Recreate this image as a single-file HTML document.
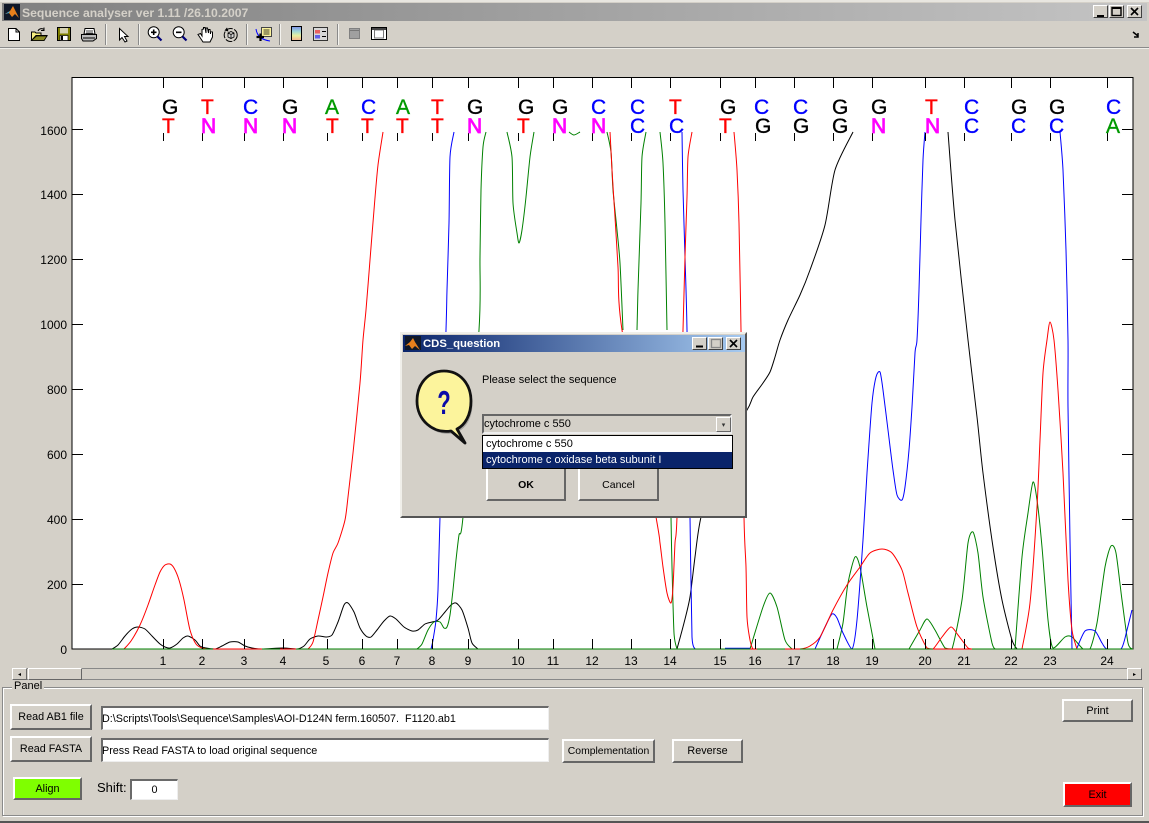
<!DOCTYPE html>
<html><head><meta charset="utf-8"><title>Sequence analyser</title>
<style>
html,body{margin:0;padding:0}
body{width:1149px;height:823px;position:relative;overflow:hidden;background:#d4d0c8;font-family:"Liberation Sans",sans-serif;font-size:11px;color:#000}
.a{position:absolute;box-sizing:border-box}
.btn{position:absolute;box-sizing:border-box;background:#d4d0c8;border-top:2px solid #fff;border-left:2px solid #fff;border-right:2px solid #666;border-bottom:2px solid #666;text-align:center;font-size:10.8px;display:flex;align-items:center;justify-content:center;white-space:nowrap}
.inp{position:absolute;box-sizing:border-box;background:#fff;border-top:2px solid #6a6a6a;border-left:2px solid #6a6a6a;border-right:1px solid #eee;border-bottom:1px solid #eee;font-size:10.8px;margin-left:0;padding-left:0;display:flex;align-items:center;white-space:nowrap;overflow:hidden}
.tb{position:absolute;box-sizing:border-box;width:15px;height:13px;background:#d4d0c8;border-top:1px solid #fff;border-left:1px solid #fff;border-right:1px solid #404040;border-bottom:1px solid #404040}
.sep{position:absolute;top:24px;width:2px;height:21px;background:#f4f3ef;border-left:1px solid #8a8a8a;box-sizing:border-box}
svg{position:absolute;left:0;top:0}
</style></head>
<body>
<!-- window frame -->
<div class="a" style="left:0;top:0;width:1149px;height:2px;background:#e8e6e0"></div>
<div class="a" style="left:0;top:821px;width:1149px;height:2px;background:#555"></div>
<div class="a" style="left:2px;top:3px;width:1145px;height:18px;background:linear-gradient(90deg,#808080,#c4c4c4)"></div>
<div class="a" style="left:22px;top:5px;height:16px;line-height:16px;font-weight:bold;font-size:12.200px;color:#d4d0c8;white-space:nowrap">Sequence analyser ver 1.11 /26.10.2007</div>
<div class="tb" style="left:1093px;top:5px"></div><div class="tb" style="left:1109px;top:5px"></div><div class="tb" style="left:1127px;top:5px"></div>
<div class="a" style="left:0;top:47px;width:1149px;height:2px;background:#f0efea;border-top:1px solid #8a8a8a"></div>

<svg width="1149" height="823" viewBox="0 0 1149 823" font-family="'Liberation Sans',sans-serif">
<!-- title icon -->
<rect x="4" y="4" width="16" height="16" fill="#101828"/>
<path d="M5 14 L10 11 L13 6 L15 10 L19 18 L15 14 L12 17 L9 13Z" fill="#e8801c"/><path d="M5 14 L10 11 L9 13Z" fill="#38a8d8"/>
<!-- title buttons glyphs -->
<path d="M1097 15h7v2h-7z" fill="#000"/>
<rect x="1112" y="7.500" width="9" height="8" fill="none" stroke="#000" stroke-width="1.400"/><path d="M1112 8h9" stroke="#000" stroke-width="2"/>
<path d="M1131 8l7 7M1138 8l-7 7" stroke="#000" stroke-width="1.600"/>
<!-- toolbar icons -->
<path d="M8.500 28.500H16L19.500 32V40.500H8.500Z" fill="#fff" stroke="#000"/><path d="M16 28.500V32H19.500" fill="none" stroke="#000"/>
<path d="M31.500 40.500V32H35L36 33H41V35.500H36L31.500 40.500H44L47 35.500H41" fill="#f8f080" stroke="#000"/><path d="M32 40L36.500 36H47L44 40.500H32Z" fill="#8a8a20" stroke="#000" stroke-width=".8"/><path d="M38 31C39 28.500 42 28 44 29.500M44 27.500V30.500H41" fill="none" stroke="#000"/>
<rect x="57.500" y="27.500" width="13" height="13" fill="#808000" stroke="#000"/><rect x="60" y="28" width="8" height="5.500" fill="#d4d0b0"/><rect x="60" y="35.500" width="8" height="5" fill="#fff" stroke="#000" stroke-width=".7"/><rect x="61" y="36" width="2" height="4" fill="#000"/>
<path d="M85 28.500H94L95 34H84Z" fill="#fff" stroke="#000"/><path d="M86 31h7M86 33h7" stroke="#000" stroke-width=".7"/><path d="M81.500 34.500H96.500V38.500L93 41H83L81.500 38.500Z" fill="#bbb" stroke="#000"/><path d="M83 38h12" stroke="#000"/>
<path d="M119.500 28.500V40L122 37.500L125 42L127 41L124.500 36.500H128Z" fill="#fff" stroke="#000"/>
<g fill="#d8d8d8" stroke="#000"><circle cx="153.700" cy="32.300" r="5.500" fill="#fff"/><circle cx="178.700" cy="32.300" r="5.500" fill="#fff"/></g>
<path d="M151 32.300h5.500M153.700 29.500v5.500M176 32.300h5.500" stroke="#000" stroke-width="1.600"/>
<path d="M157.500 36.500L161.500 40.500M182.500 36.500L186.500 40.500" stroke="#00007a" stroke-width="2.200"/>
<path d="M198 34.500L200.500 33.500L202 36V29.500L203.500 29V27.500L205 27.500L206 33V28L207.500 28L208.500 33V29.500L210 29.500L210.500 34V31.500L212.500 32V37L210 42H203L201 39Z" fill="#fff" stroke="#000"/>
<circle cx="230.700" cy="35" r="6.500" fill="none" stroke="#000" stroke-dasharray="7 1.500"/><path d="M224.500 30.500L227 27.500L228.500 31.500Z" fill="#000"/><path d="M228 33L231 31.500L234 33V37L231 38.500L228 37ZM231 34.500V38M228 33L231 34.500L234 33" fill="#d8d8d8" stroke="#000" stroke-width=".8"/>
<rect x="261.500" y="27.500" width="10" height="9" fill="#fbf39c" stroke="#444"/><path d="M263.500 30h6M263.500 32h6M263.500 34h6" stroke="#000" stroke-width=".8"/>
<path d="M256 29C257 36 262 40 270 41" fill="none" stroke="#00f"/><path d="M256.500 37H264M260.500 33.500V41" stroke="#000" stroke-width="2.200"/>
<defs><linearGradient id="cb" x1="0" y1="0" x2="0" y2="1"><stop offset="0" stop-color="#7f8fe8"/><stop offset=".35" stop-color="#9fd8d8"/><stop offset=".65" stop-color="#e8f0a0"/><stop offset="1" stop-color="#f4b090"/></linearGradient></defs>
<rect x="291.500" y="26.500" width="10" height="14" fill="url(#cb)" stroke="#000"/>
<rect x="313.500" y="27.500" width="14" height="13" fill="#d8d8d8" stroke="#333"/><rect x="315" y="30" width="5" height="3.500" fill="#e86060"/><rect x="315" y="35" width="5" height="3.500" fill="#6060e8"/><path d="M322 31.500h4M322 36.500h4" stroke="#000"/>
<rect x="349.500" y="28.500" width="10" height="10" fill="#a0a0a0" stroke="#808080"/><path d="M350 30.500h9" stroke="#777"/>
<rect x="371.500" y="27.500" width="15" height="12" fill="#fff" stroke="#000"/><rect x="374.500" y="30" width="9" height="8" fill="#fff" stroke="#777"/><rect x="372" y="28" width="14" height="2" fill="#444"/>
<path d="M1133 32L1138 36M1138 33V37H1134" fill="none" stroke="#000" stroke-width="1.500"/>

<!-- plot -->
<rect x="72" y="77" width="1061" height="572" fill="#fff"/>
<g id="traces" fill="none" stroke-width="1">
<g stroke="#000">
<polyline points="112,649 118,645 125,636 132,629 138,627 145,629 152,636 160,644 165,647 170,648 177,644 183,638 188,636 195,640 200,646 206,648 215,649 222,646 230,642 238,642 245,646 252,648 262,649 283,648 297,649 304,646 310,639 318,636 326,637 332,635 338,622 344,605 348,603 354,612 360,628 366,636 371,637 377,630 384,621 390,616 396,619 404,627 412,631 418,630 425,624 432,622 438,620 445,612 451,605 456,603 462,610 468,628 472,643 478,649"/>
<polyline points="677,649 684,623 690,597 695,557 701,517 720,450 747,410 753,397 763,383 770,372 775,357 780,340 788,320 800,295 810,270 825,225 835,170 853,132"/>
<polyline points="948,132 955,220 968,340 977,417 983,473 993,547 1002,600 1012,640 1017,649"/>
</g>
<g stroke="#008000">
<polyline points="417,649 422,644 428,630 434,622 440,622 444,628 447,627 450,615 453,590 456,560 459,535 463,517 479,330 480,257 481,190 483,147 486,132"/>
<polyline points="507,132 512,157 513,203 517,233 519,243 522,230 526,197 530,157 534,132"/>
<polyline points="569,132 574,135 580,132"/>
<polyline points="607,132 611,152 613,190 617,230 620,263 623,330"/>
<polyline points="646,132 642,157 641,203 638,290 637,330"/>
<polyline points="660,132 663,163 665,223 667,330"/>
<polyline points="671,517 672,567 674,633 677,649"/>
<polyline points="750,649 763,607 770,593 777,607 785,640 792,649"/>
<polyline points="837,649 843,623 848,583 855,557 860,567 867,607 875,649"/>
<polyline points="909,649 920,630 927,619 935,630 945,648 952,649 962,600 968,543 973,532 978,553 983,597 992,643 995,649"/>
<polyline points="1015,649 1022,557 1028,513 1033,482 1037,500 1042,547 1048,620 1053,648 1065,637 1072,637 1083,649 1090,649 1097,623 1105,567 1111,546 1116,553 1122,600 1128,643 1132,649"/>
</g>
<g stroke="#0000ff">
<polyline points="431,649 433,640 436,620 438,590 440,517 446,330 447,290 449,223 450,157 454,132"/>
<polyline points="682,132 683,190 685,257 687,330 690,517 692,637 695,649"/>
<path d="M725 648.500H750" stroke-width="1.500"/>
<polyline points="815,649 825,627 832,614 837,618 843,633 852,649 857,620 863,540 867,473 872,403 876,377 880,372 883,390 888,430 893,470 897,495 902,500 905,487 909,450 912,407 915,353 917,340 919,290 921,220 923,160 925,132"/>
<polyline points="1060,132 1063,170 1066,250 1068,340 1068,407 1070,540 1072,649"/>
<polyline points="1077,648 1085,631 1095,631 1102,643 1107,649 1121,649 1127,630 1132,610"/>
</g>
<g stroke="#ff0000">
<polyline points="124,649 131,641 140,625 148,605 155,585 160,572 165,565 170,564 174,568 179,580 184,600 190,630 196,644 202,648 208,649"/>
<polyline points="305,649 308,649 313,642 318,620 323,597 328,573 333,553 338,543 345,520 348,497 353,453 360,383 363,340 366,310 370,260 374,210 378,165 383,132"/>
<polyline points="610,132 612,170 615,217 618,267 622,330 656,517 660,543 663,567 667,593 671,603 673,587 675,543 677,517 683,330 685,257 687,197 688,157 692,132"/>
<polyline points="734,132 737,170 739,223 741,330 744,517 746,567 747,617 750,640 753,649 757,649"/>
<polyline points="785,649 800,649 810,646 820,637 833,610 847,585 860,567 870,553 882,549 892,553 902,570 908,593 917,627 927,648 933,649 942,637 951,627 958,635 968,648 972,649"/>
<polyline points="1022,649 1030,603 1037,507 1040,440 1043,373 1047,340 1050,322 1054,340 1058,390 1063,473 1068,580 1072,630 1077,649"/>
</g>
</g>
<!-- axes -->
<path d="M72 77.500H1133V649H72Z" fill="none" stroke="#000"/>
<path d="M112 649H1133" stroke="#008000"/>
<path d="M213 649H262M280 649H296M750 649H757M785 649H800M933 649H972" stroke="#f00"/>
<g stroke="#000" fill="none">
<path d="M72 129.500h11M72 194.500h11M72 259.500h11M72 324.500h11M72 389.500h11M72 454.500h11M72 519.500h11M72 584.500h11M1122 129.500h11M1122 194.500h11M1122 259.500h11M1122 324.500h11M1122 389.500h11M1122 454.500h11M1122 519.500h11M1122 584.500h11"/>
<path d="M163.500 77v11M202.500 77v11M244.500 77v11M283.500 77v11M327.500 77v11M362.500 77v11M397.500 77v11M432.500 77v11M468.500 77v11M518.500 77v11M553.500 77v11M592.500 77v11M631.500 77v11M670.500 77v11M720.500 77v11M755.500 77v11M794.500 77v11M833.500 77v11M872.500 77v11M925.500 77v11M964.500 77v11M1011.500 77v11M1050.500 77v11M1107.500 77v11"/>
<path d="M163.500 133v8M202.500 133v8M244.500 133v8M283.500 133v8M327.500 133v8M362.500 133v8M397.500 133v8M432.500 133v8M468.500 133v8M518.500 133v8M553.500 133v8M592.500 133v8M631.500 133v8M670.500 133v8M720.500 133v8M755.500 133v8M794.500 133v8M833.500 133v8M872.500 133v8M925.500 133v8M964.500 133v8M1011.500 133v8M1050.500 133v8M1107.500 133v8"/>
<path d="M163.500 639v10M202.500 639v10M244.500 639v10M283.500 639v10M327.500 639v10M362.500 639v10M397.500 639v10M432.500 639v10M468.500 639v10M518.500 639v10M553.500 639v10M592.500 639v10M631.500 639v10M670.500 639v10M720.500 639v10M755.500 639v10M794.500 639v10M833.500 639v10M872.500 639v10M925.500 639v10M964.500 639v10M1011.500 639v10M1050.500 639v10M1107.500 639v10"/>
</g>
<!-- y labels -->
<g font-size="12" text-anchor="end" fill="#000">
<text x="67" y="135">1600</text><text x="67" y="199">1400</text><text x="67" y="264">1200</text><text x="67" y="329">1000</text><text x="67" y="394">800</text><text x="67" y="459">600</text><text x="67" y="524">400</text><text x="67" y="589">200</text><text x="67" y="654">0</text>
</g>
<!-- x labels -->
<g font-size="12" text-anchor="middle" fill="#000">
<text x="163" y="665">1</text><text x="202" y="665">2</text><text x="244" y="665">3</text><text x="283" y="665">4</text><text x="326" y="665">5</text><text x="362" y="665">6</text><text x="397" y="665">7</text><text x="432" y="665">8</text><text x="468" y="665">9</text><text x="518" y="665">10</text><text x="553" y="665">11</text><text x="592" y="665">12</text><text x="631" y="665">13</text><text x="670" y="665">14</text><text x="720" y="665">15</text><text x="755" y="665">16</text><text x="794" y="665">17</text><text x="833" y="665">18</text><text x="872" y="665">19</text><text x="925" y="665">20</text><text x="964" y="665">21</text><text x="1011" y="665">22</text><text x="1050" y="665">23</text><text x="1107" y="665">24</text>
</g>
<!-- sequence letters -->
<g font-size="21" stroke-width=".35">
<g transform="translate(0,0)">
<text x="162" y="114" fill="#000" stroke="#000">G</text><text x="201" y="114" fill="#f00" stroke="#f00">T</text><text x="243" y="114" fill="#00f" stroke="#00f">C</text><text x="282" y="114" fill="#000" stroke="#000">G</text><text x="325" y="114" fill="#090" stroke="#090">A</text><text x="361" y="114" fill="#00f" stroke="#00f">C</text><text x="396" y="114" fill="#090" stroke="#090">A</text><text x="431" y="114" fill="#f00" stroke="#f00">T</text><text x="467" y="114" fill="#000" stroke="#000">G</text><text x="518" y="114" fill="#000" stroke="#000">G</text><text x="552" y="114" fill="#000" stroke="#000">G</text><text x="591" y="114" fill="#00f" stroke="#00f">C</text><text x="630" y="114" fill="#00f" stroke="#00f">C</text><text x="669" y="114" fill="#f00" stroke="#f00">T</text><text x="720" y="114" fill="#000" stroke="#000">G</text><text x="754" y="114" fill="#00f" stroke="#00f">C</text><text x="793" y="114" fill="#00f" stroke="#00f">C</text><text x="832" y="114" fill="#000" stroke="#000">G</text><text x="871" y="114" fill="#000" stroke="#000">G</text><text x="925" y="114" fill="#f00" stroke="#f00">T</text><text x="964" y="114" fill="#00f" stroke="#00f">C</text><text x="1011" y="114" fill="#000" stroke="#000">G</text><text x="1049" y="114" fill="#000" stroke="#000">G</text><text x="1106" y="114" fill="#00f" stroke="#00f">C</text>
<text x="162" y="133" fill="#f00" stroke="#f00">T</text><text x="201" y="133" fill="#f0f" stroke="#f0f" stroke-width=".8">N</text><text x="243" y="133" fill="#f0f" stroke="#f0f" stroke-width=".8">N</text><text x="282" y="133" fill="#f0f" stroke="#f0f" stroke-width=".8">N</text><text x="326" y="133" fill="#f00" stroke="#f00">T</text><text x="361" y="133" fill="#f00" stroke="#f00">T</text><text x="396" y="133" fill="#f00" stroke="#f00">T</text><text x="431" y="133" fill="#f00" stroke="#f00">T</text><text x="467" y="133" fill="#f0f" stroke="#f0f" stroke-width=".8">N</text><text x="517" y="133" fill="#f00" stroke="#f00">T</text><text x="552" y="133" fill="#f0f" stroke="#f0f" stroke-width=".8">N</text><text x="591" y="133" fill="#f0f" stroke="#f0f" stroke-width=".8">N</text><text x="630" y="133" fill="#00f" stroke="#00f">C</text><text x="669" y="133" fill="#00f" stroke="#00f">C</text><text x="719" y="133" fill="#f00" stroke="#f00">T</text><text x="755" y="133" fill="#000" stroke="#000">G</text><text x="793" y="133" fill="#000" stroke="#000">G</text><text x="832" y="133" fill="#000" stroke="#000">G</text><text x="871" y="133" fill="#f0f" stroke="#f0f" stroke-width=".8">N</text><text x="925" y="133" fill="#f0f" stroke="#f0f" stroke-width=".8">N</text><text x="964" y="133" fill="#00f" stroke="#00f">C</text><text x="1011" y="133" fill="#00f" stroke="#00f">C</text><text x="1049" y="133" fill="#00f" stroke="#00f">C</text><text x="1106" y="133" fill="#090" stroke="#090">A</text>
</g>
</g>
</svg>

<div class="sep" style="left:105px"></div><div class="sep" style="left:138px"></div><div class="sep" style="left:246px"></div><div class="sep" style="left:279px"></div><div class="sep" style="left:337px"></div>

<!-- scrollbar -->
<div class="a" style="left:12px;top:668px;width:1130px;height:12px;border-top:1px solid #888;border-bottom:1px solid #888"></div>
<div class="btn" style="left:12px;top:668px;width:15px;height:12px;border-width:1px;font-size:6px">◂</div>
<div class="btn" style="left:28px;top:668px;width:54px;height:12px;border-width:1px"></div>
<div class="btn" style="left:1127px;top:668px;width:15px;height:12px;border-width:1px;font-size:6px">▸</div>

<!-- panel -->
<div class="a" style="left:2px;top:687px;width:1141px;height:129px;border:1px solid #8a8a8a;box-shadow:inset 1px 1px 0 #fff,1px 1px 0 #fff"></div>
<div class="a" style="left:12px;top:680px;padding:0 2px;height:13px;line-height:13px;background:#d4d0c8;font-size:11px">Panel</div>
<div class="btn" style="left:10px;top:704px;width:82px;height:26px">Read AB1 file</div>
<div class="btn" style="left:10px;top:736px;width:82px;height:26px">Read FASTA</div>
<div class="inp" style="left:101px;top:706px;width:448px;height:24px;text-indent:-1px">D:\Scripts\Tools\Sequence\Samples\AOI-D124N ferm.160507.&nbsp; F1120.ab1</div>
<div class="inp" style="left:101px;top:738px;width:448px;height:24px;text-indent:-1px">Press Read FASTA to load original sequence</div>
<div class="btn" style="left:562px;top:739px;width:93px;height:24px;font-size:10.4px">Complementation</div>
<div class="btn" style="left:672px;top:739px;width:71px;height:24px">Reverse</div>
<div class="btn" style="left:13px;top:777px;width:69px;height:23px;background:#7fff00">Align</div>
<div class="a" style="left:97px;top:780px;height:16px;line-height:16px;font-size:13px">Shift:</div>
<div class="inp" style="left:130px;top:779px;width:48px;height:21px;justify-content:center">0</div>
<div class="btn" style="left:1062px;top:699px;width:71px;height:23px">Print</div>
<div class="btn" style="left:1063px;top:782px;width:69px;height:25px;background:#f00">Exit</div>

<!-- dialog -->
<div class="a" style="left:400px;top:332px;width:347px;height:186px;background:#d4d0c8;border:2px solid #f0efea;border-right-color:#555;border-bottom-color:#555;outline:0"></div>
<div class="a" style="left:403px;top:335px;width:342px;height:17px;background:linear-gradient(90deg,#0a246a,#a6caf0)"></div>
<div class="a" style="left:423px;top:336px;height:17px;line-height:17px;color:#fff;font-weight:bold;font-size:11.300px;white-space:nowrap">CDS_question</div>
<div class="tb" style="left:692px;top:337px"></div><div class="tb" style="left:708px;top:337px"></div><div class="tb" style="left:726px;top:337px"></div>
<div class="a" style="left:482px;top:374px;height:13px;line-height:13px;font-size:11px;white-space:nowrap">Please select the sequence</div>
<div class="btn" style="left:486px;top:462px;width:80px;height:39px;font-weight:bold;padding-top:7px;font-size:10.5px">OK</div>
<div class="btn" style="left:578px;top:462px;width:81px;height:39px;padding-top:7px;font-size:10.5px">Cancel</div>
<div class="a" style="left:482px;top:414px;width:250px;height:20px;border:2px solid #666;border-right-color:#eee;border-bottom-color:#eee;background:#d4d0c8;font-size:11px;line-height:16px;padding-left:0">cytochrome c 550</div>
<div class="btn" style="left:716px;top:417px;width:15px;height:15px;border-width:1px;font-size:7px;color:#333">▾</div>
<div class="a" style="left:482px;top:435px;width:251px;height:34px;border:1px solid #000;background:#fff"></div>
<div class="a" style="left:483px;top:436px;width:249px;height:16px;line-height:16px;padding-left:3px;font-size:11px">cytochrome c 550</div>
<div class="a" style="left:483px;top:452px;width:249px;height:16px;line-height:16px;padding-left:3px;font-size:11px;background:#0a246a;color:#fff">cytochrome c oxidase beta subunit I</div>
<svg width="1149" height="823" viewBox="0 0 1149 823" font-family="'Liberation Sans',sans-serif" style="pointer-events:none">
<path d="M405 350V336H421V350Z" fill="#101828"/><path d="M405 346L410 342L413 338L415 342L420 350L415 346L412 349L409 345Z" fill="#e8801c"/>
<path d="M696 345.500h7v2h-7z" fill="#000"/><rect x="711.500" y="339.500" width="9" height="8" fill="none" stroke="#888" stroke-width="1.300"/>
<path d="M730 340l7 7M737 340l-7 7" stroke="#000" stroke-width="1.600"/>
<path d="M417 401C417 384 428 371 444 371C460 371 471 384 471 401C471 415 465 425 457 429L465 443L451 431C433 434 417 420 417 401Z" fill="#777" opacity=".5" transform="translate(1.500,2.500)"/>
<path d="M417 401C417 384 428 371 444 371C460 371 471 384 471 401C471 415 465 425 457 429L465 443L451 431C433 434 417 420 417 401Z" fill="#fcf49c" stroke="#111" stroke-width="2.800" stroke-linejoin="round"/>
<text transform="translate(444,414) scale(.66,1)" text-anchor="middle" font-size="33" font-weight="bold" fill="#0a0aa8">?</text>
</svg>
<script>
document.querySelectorAll('#traces polyline').forEach(function(pl){
  var p=pl.getAttribute('points').trim().split(/\s+/).map(function(s){return s.split(',').map(Number)});
  var c=function(v){return Math.min(649,Math.max(132,v))};
  var d='M'+p[0][0]+' '+p[0][1];
  for(var i=0;i<p.length-1;i++){
    var a=p[Math.max(0,i-1)],b=p[i],e=p[i+1],f=p[Math.min(p.length-1,i+2)],k=0.13;
    d+=' C'+(b[0]+(e[0]-a[0])*k).toFixed(1)+' '+c(b[1]+(e[1]-a[1])*k).toFixed(1)+' '+(e[0]-(f[0]-b[0])*k).toFixed(1)+' '+c(e[1]-(f[1]-b[1])*k).toFixed(1)+' '+e[0]+' '+e[1];
  }
  var n=document.createElementNS('http://www.w3.org/2000/svg','path');
  n.setAttribute('d',d);pl.parentNode.replaceChild(n,pl);
});
</script>
</body></html>
